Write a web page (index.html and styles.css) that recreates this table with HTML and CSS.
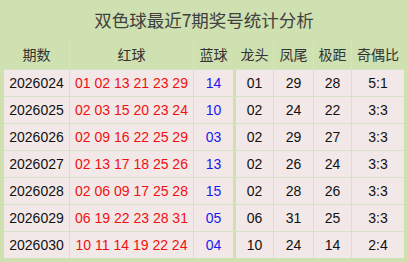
FILE: index.html
```html
<!DOCTYPE html>
<html lang="zh">
<head>
<meta charset="utf-8">
<link rel="stylesheet" href="styles.css">
</head>
<body>
<div class="page">
  <div class="title">双色球最近7期奖号统计分析</div>
  <div class="table">
    <div class="th">期数</div><div class="th">红球</div><div class="th sep">蓝球</div><div class="th">龙头</div><div class="th">凤尾</div><div class="th">极距</div><div class="th">奇偶比</div>

    <div class="td">2026024</div><div class="td red">01 02 13 21 23 29</div><div class="td blue sep">14</div><div class="td">01</div><div class="td">29</div><div class="td">28</div><div class="td">5:1</div>
    <div class="td">2026025</div><div class="td red">02 03 15 20 23 24</div><div class="td blue sep">10</div><div class="td">02</div><div class="td">24</div><div class="td">22</div><div class="td">3:3</div>
    <div class="td">2026026</div><div class="td red">02 09 16 22 25 29</div><div class="td blue sep">03</div><div class="td">02</div><div class="td">29</div><div class="td">27</div><div class="td">3:3</div>
    <div class="td">2026027</div><div class="td red">02 13 17 18 25 26</div><div class="td blue sep">13</div><div class="td">02</div><div class="td">26</div><div class="td">24</div><div class="td">3:3</div>
    <div class="td">2026028</div><div class="td red">02 06 09 17 25 28</div><div class="td blue sep">15</div><div class="td">02</div><div class="td">28</div><div class="td">26</div><div class="td">3:3</div>
    <div class="td">2026029</div><div class="td red">06 19 22 23 28 31</div><div class="td blue sep">05</div><div class="td">06</div><div class="td">31</div><div class="td">25</div><div class="td">3:3</div>
    <div class="td">2026030</div><div class="td red">10 11 14 19 22 24</div><div class="td blue sep">04</div><div class="td">10</div><div class="td">24</div><div class="td">14</div><div class="td">2:4</div>
  </div>
</div>
</body>
</html>
```
FILE: styles.css
```css
html, body {
  margin: 0;
  padding: 0;
}
body {
  background: #cfe0b1;
  font-family: "Liberation Sans", Arial, "Noto Sans CJK SC", sans-serif;
  width: 408px;
  height: 262px;
  overflow: hidden;
}
.page {
  padding: 0 4px 4px 4px;
}
.title {
  height: 40px;
  line-height: 40px;
  text-align: center;
  font-size: 17.5px;
  color: #404040;
  font-family: "Noto Sans CJK SC", "Liberation Sans", sans-serif;
}
.table {
  display: grid;
  grid-template-columns: 65px 123px 41px 37px 39px 37px 52px;
  grid-template-rows: 29px repeat(7, 26px);
  column-gap: 1px;
  row-gap: 1px;
  background: #d4e3c2;
}
.th {
  background: #cfe0b1;
  display: flex;
  align-items: center;
  justify-content: center;
  font-size: 14px;
  color: #333;
  font-family: "Noto Sans CJK SC", "Liberation Sans", sans-serif;
  padding-bottom: 2px;
}
.td {
  background: #f3e8e8;
  display: flex;
  align-items: center;
  justify-content: center;
  font-size: 14px;
  color: #111;
}
.sep {
  margin-right: 2px;
  box-shadow: 3px 0 0 #cfe0b1;
}
.red { color: #f01010; }
.blue { color: #1a1aee; }
```
